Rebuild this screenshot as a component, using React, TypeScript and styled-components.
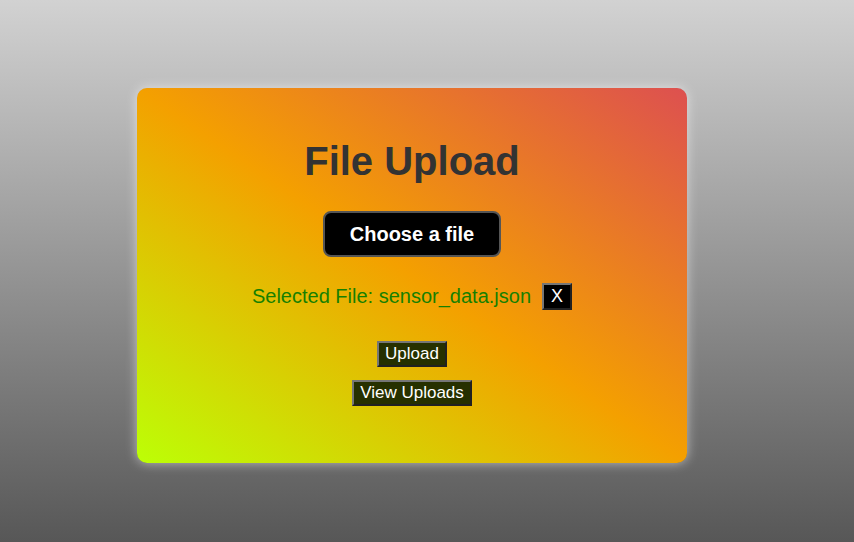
import React from "react";
import styled, { createGlobalStyle } from "styled-components";

const Global = createGlobalStyle`
  html, body { margin: 0; padding: 0; }
  body {
    height: 542px;
    background: linear-gradient(to bottom, #d2d2d2 0%, #575757 100%);
    font-family: "Liberation Sans", Arial, sans-serif;
    overflow: hidden;
  }
`;

const Page = styled.div`
  display: flex;
  justify-content: center;
  padding-top: 88px;
  padding-right: 30px;
`;

const Card = styled.div`
  width: 550px;
  height: 375px;
  box-sizing: border-box;
  border-radius: 10px;
  background: linear-gradient(to top right, #bcff06 0%, #f4a000 50%, #dd5050 100%);
  box-shadow: 0 0 12px rgba(255, 255, 255, 0.55);
  display: flex;
  flex-direction: column;
  align-items: center;
  padding-top: 50px;
`;

const Title = styled.h1`
  margin: 0;
  font-size: 40px;
  line-height: 46px;
  font-weight: bold;
  color: #333;
`;

const ChooseButton = styled.button`
  margin-top: 27px;
  height: 46px;
  padding: 0 25px;
  background: #000;
  color: #fff;
  border: 2px solid #555;
  border-radius: 8px;
  font-family: inherit;
  font-size: 20px;
  font-weight: bold;
  line-height: 22px;
  cursor: pointer;
`;

const SelectedRow = styled.div`
  margin-top: 26px;
  display: flex;
  align-items: center;
  gap: 11px;
`;

const SelectedText = styled.span`
  color: #168000;
  font-size: 20px;
  line-height: 23px;
`;

const ClearButton = styled.button`
  background: #000;
  color: #fff;
  border: 2px outset #767676;
  font-family: inherit;
  font-size: 18px;
  line-height: 21px;
  padding: 1px 7px;
  height: 27px;
  cursor: pointer;
`;

const ActionButton = styled.button<{ $first?: boolean }>`
  margin-top: ${(p) => (p.$first ? "31px" : "13px")};
  background: #263000;
  color: #fff;
  border: 2px outset #767676;
  font-family: inherit;
  font-size: 17px;
  line-height: 18px;
  height: 26px;
  padding: 1px 6.5px;
  cursor: pointer;
`;

export default function App() {
  return (
    <>
      <Global />
      <Page>
        <Card>
          <Title>File Upload</Title>
          <ChooseButton>Choose a file</ChooseButton>
          <SelectedRow>
            <SelectedText>Selected File: sensor_data.json</SelectedText>
            <ClearButton>X</ClearButton>
          </SelectedRow>
          <ActionButton $first>Upload</ActionButton>
          <ActionButton>View Uploads</ActionButton>
        </Card>
      </Page>
    </>
  );
}
